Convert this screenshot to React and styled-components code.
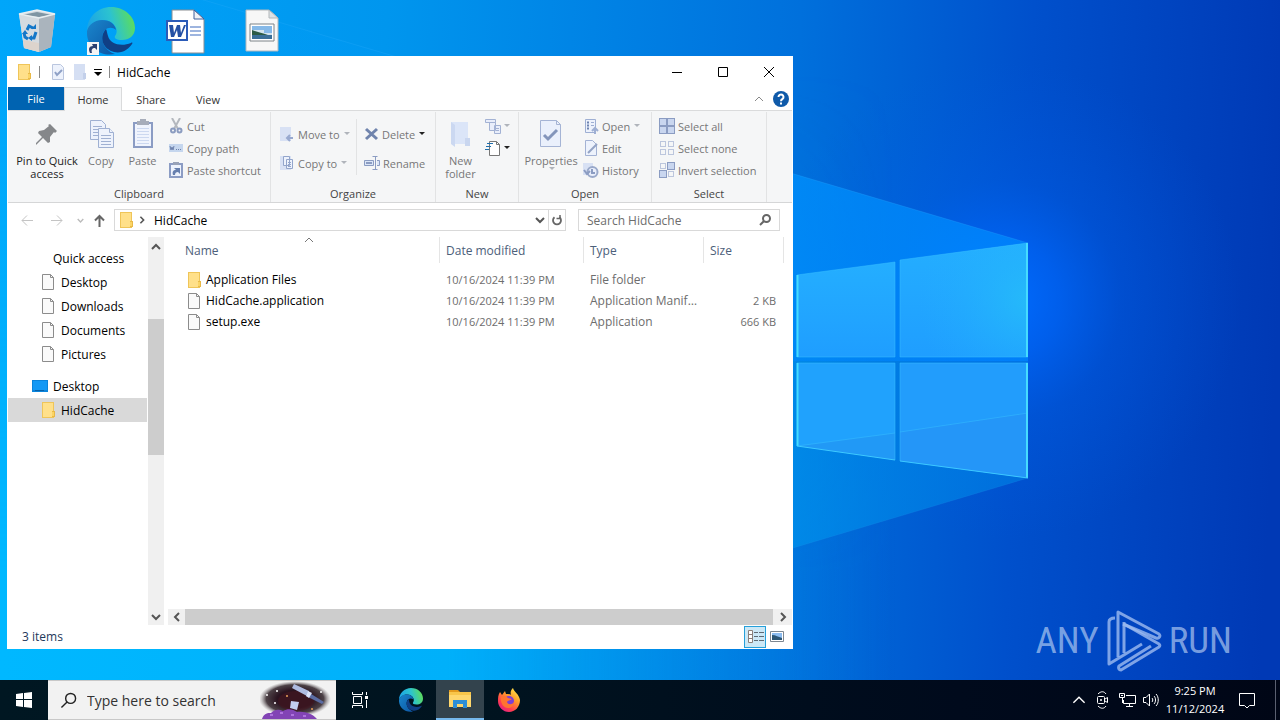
import React from 'react'
import styled, { createGlobalStyle, css } from 'styled-components'

const GlobalStyle = createGlobalStyle`
  * {
    box-sizing: border-box;
  }

  body {
    margin: 0;
    font-family: "Open Sans", "Noto Sans", sans-serif;
    font-size: 12px;
    color: #000;
  }

  button, input {
    font: inherit;
    color: inherit;
    border: 0;
    padding: 0;
    background: none;
    border-radius: 0;
  }

  svg {
    display: block;
    flex: none;
  }
`

/* ---------- desktop ---------- */

const Screen = styled.div`
  position: relative;
  min-height: 100vh;
  display: flex;
  flex-direction: column;
  overflow: hidden;
  background: #0078d7;
`

const WallpaperArt = styled.svg`
  position: absolute;
  inset: 0;
  width: 100%;
  height: 100%;
`

const Workspace = styled.main`
  position: relative;
  flex: 1;
`

const DesktopIcons = styled.div`
  display: flex;
  padding-top: 7px;
`

const DesktopIcon = styled.button`
  width: 74px;
  height: 48px;
  display: flex;
  justify-content: center;

  &:last-child {
    width: 80px;
  }
`

const Watermark = styled.div`
  position: absolute;
  right: 48px;
  bottom: 7px;
  display: flex;
  align-items: center;
  gap: 7px;
  color: rgba(190, 212, 245, 0.65);
  font-family: "Roboto Condensed", "Liberation Sans Narrow", "Liberation Sans", sans-serif;
  font-size: 37px;
  line-height: 64px;
`

/* ---------- explorer window ---------- */

const Window = styled.section`
  position: absolute;
  top: 56px;
  left: 7px;
  right: 487px;
  bottom: 31px;
  display: flex;
  flex-direction: column;
  background: #fff;
  border: 1px solid #fff;
  overflow: hidden;
`

const TitleBar = styled.header`
  display: flex;
  align-items: center;
  height: 30px;
  padding-left: 8px;

  > h1 {
    flex: 1;
    margin: 0;
    font-size: 12px;
    font-weight: 400;
  }
`

const QuickButton = styled.button`
  height: 22px;
  display: flex;
  align-items: center;
  justify-content: center;
  width: ${p => p.$width || 22}px;
`

const Rule = styled.span`
  width: 1px;
  height: 12px;
  margin: 0 ${p => p.$gap || 7}px;
  background: #8a8a8a;
`

const CaptionButton = styled.button`
  width: 46px;
  height: 30px;
  display: flex;
  align-items: center;
  justify-content: center;
`

const TabBar = styled.nav`
  display: flex;
  height: 24px;
  border-bottom: 1px solid #dadbdc;
`

const Tab = styled.button`
  width: ${p => p.$width || 56}px;
  height: 24px;
  font-size: 11px;
  color: #333;
  ${p => p.$file && css`
    height: 23px;
    color: #fff;
    background: #0063b1;
  `}
  ${p => p.$active && css`
    background: #f5f6f7;
    border: 1px solid #dadbdc;
    border-bottom: 0;
  `}
`

const TabTools = styled.div`
  margin-left: auto;
  display: flex;
  align-items: center;
  gap: 6px;
  padding-right: 3px;
`

const Ribbon = styled.div`
  display: flex;
  height: 92px;
  font-size: 11px;
  background: #f5f6f7;
  border-bottom: 1px solid #d5d6d7;
`

const Group = styled.section`
  width: ${p => p.$width}px;
  display: flex;
  flex-direction: column;
  border-right: 1px solid #e2e3e4;
  margin: 1px 0 0;

  > h2 {
    margin: 0;
    text-align: center;
    font-size: 11px;
    line-height: 17px;
    font-weight: 400;
    color: #444;
  }
`

const GroupBody = styled.div`
  flex: 1;
  display: flex;
  padding-top: 3px;
  padding-left: ${p => p.$inset || 4}px;
`

const BigButton = styled.button`
  width: ${p => p.$width}px;
  height: 66px;
  display: flex;
  flex-direction: column;
  align-items: center;
  padding-top: 3px;
  line-height: 13px;
  color: ${p => (p.$enabled ? '#222' : '#777')};

  > svg {
    margin-bottom: 4px;
  }
`

const Stack = styled.div`
  display: flex;
  flex-direction: column;
  width: ${p => p.$width || 'auto'};
  gap: ${p => p.$gap || 0}px;
  padding-top: ${p => p.$top || 0}px;
  padding-left: 4px;
`

const SmallButton = styled.button`
  height: 22px;
  display: flex;
  align-items: center;
  gap: ${p => p.$gap || 3}px;
  color: #777;
  white-space: nowrap;
`

const StackDivider = styled.span`
  width: 1px;
  height: 56px;
  margin: 4px 3px 0 8px;
  background: #e2e3e4;
`

const AddressRow = styled.div`
  display: flex;
  align-items: center;
  height: 34px;
  padding: 0 12px 0 9px;
`

const NavButton = styled.button`
  width: ${p => p.$width || 28}px;
  height: 22px;
  display: flex;
  align-items: center;
  justify-content: center;
`

const AddressBar = styled.div`
  flex: 1;
  display: flex;
  align-items: center;
  height: 22px;
  padding-left: 3px;
  margin-left: 1px;
  border: 1px solid #d9d9d9;

  > span {
    flex: 1;
    padding-left: 4px;
  }
`

const RefreshButton = styled(NavButton)`
  border-left: 1px solid #d9d9d9;
`

const SearchField = styled.label`
  width: 202px;
  height: 22px;
  margin-left: 12px;
  display: flex;
  align-items: center;
  padding: 0 8px;
  border: 1px solid #d9d9d9;

  > input {
    flex: 1;
    min-width: 0;
    outline: 0;
  }
  > input::placeholder {
    color: #6d6d6d;
    opacity: 1;
  }
`

const Body = styled.div`
  flex: 1;
  min-height: 0;
  display: flex;
`

const Tree = styled.nav`
  width: 139px;
  padding-top: 9px;
`

const TreeItem = styled.button`
  width: 100%;
  height: 24px;
  display: flex;
  align-items: center;
  gap: 5px;
  padding-left: ${p => p.$indent}px;
  margin-top: ${p => (p.$spaced ? 8 : 0)}px;
  background: ${p => (p.$selected ? '#d9d9d9' : 'transparent')};
`

const VScroll = styled.div`
  width: 16px;
  margin-left: 1px;
  display: flex;
  flex-direction: column;
  background: #f0f0f0;

  > i {
    flex: 0 0 35%;
    background: #cdcdcd;
  }
  > span {
    flex: 0 0 16%;
  }
  > button:last-child {
    margin-top: auto;
  }
`

const HScroll = styled.div`
  height: 16px;
  margin: auto 0 0 4px;
  display: flex;
  background: #f0f0f0;

  > i {
    flex: 1;
    background: #cdcdcd;
  }
`

const ScrollButton = styled.button`
  flex: none;
  width: ${p => p.$width || 16}px;
  height: ${p => p.$height || 16}px;
  display: flex;
  align-items: center;
  justify-content: center;
`

const FilePane = styled.div`
  flex: 1;
  min-width: 0;
  display: flex;
  flex-direction: column;
`

const FileTable = styled.table`
  width: calc(100% - 8px);
  table-layout: fixed;
  border-collapse: separate;
  border-spacing: 0;
  color: #6d6d6d;

  th {
    height: 26px;
    padding: 0 6px;
    border-right: 1px solid #e5e5e5;
    text-align: left;
    font-weight: 400;
    color: #4c607a;
  }
  th:first-child {
    padding-left: 21px;
  }
  td {
    height: 21px;
    padding: 0 3px 0 6px;
    white-space: nowrap;
    overflow: hidden;
    text-overflow: ellipsis;
  }
  td:first-child {
    padding-left: 22px;
    color: #000;
  }
  td:nth-child(2) {
    font-size: 11px;
  }
  td:last-child {
    padding-right: 8px;
    text-align: right;
    font-size: 11px;
  }
  tbody::before {
    content: "";
    display: block;
    height: 6px;
  }
`

const HeadCell = styled.div`
  position: relative;

  > svg {
    position: absolute;
    top: -7px;
    left: 119px;
  }
`

const FileName = styled.div`
  display: flex;
  align-items: center;
  gap: 4px;
`

const StatusBar = styled.footer`
  height: 23px;
  display: flex;
  align-items: center;
  padding: 0 4px 0 14px;
  color: #1e395b;

  > span {
    flex: 1;
  }
`

const ViewButton = styled.button`
  width: 22px;
  height: 22px;
  display: flex;
  align-items: center;
  justify-content: center;
  ${p => p.$active && css`
    background: #cce8f6;
    border: 1px solid #26a0da;
  `}
`

/* ---------- taskbar ---------- */

const Taskbar = styled.footer`
  position: relative;
  display: flex;
  height: 40px;
  color: #fff;
  background: linear-gradient(90deg, #001722 0%, #00131f 40%, #000a1c 75%, #000616 100%);
`

const TaskButton = styled.button`
  width: 48px;
  height: 40px;
  display: flex;
  align-items: center;
  justify-content: center;
  ${p => p.$active && css`
    background: #33434d;
    border-bottom: 2px solid #76b9ed;
  `}
`

const TaskSearch = styled.label`
  width: 288px;
  display: flex;
  align-items: center;
  padding-left: 12px;
  background: #f2f2f2;
  border: 1px solid #c8c8c8;
  border-width: 1px 0;
  color: #2b2b2b;

  > input {
    flex: 1;
    min-width: 0;
    margin-left: 10px;
    outline: 0;
    font-size: 14px;
  }
  > input::placeholder {
    color: #333;
    opacity: 1;
  }
`

const PinnedApps = styled.div`
  display: flex;
  gap: 1px;
  padding-left: 3px;
`

const Tray = styled.div`
  margin-left: auto;
  display: flex;
  align-items: center;
`

const TrayButton = styled.button`
  width: ${p => p.$width || 24}px;
  height: 40px;
  display: flex;
  align-items: center;
  justify-content: center;
`

const Clock = styled.button`
  width: 64px;
  height: 40px;
  font-size: 11px;
  line-height: 18px;
  white-space: nowrap;
  text-align: center;
`

const ShowDesktop = styled.button`
  width: 5px;
  height: 40px;
  margin-left: 8px;
  border-left: 1px solid #5a6070;
`

/* ---------- drawings ---------- */

const Wallpaper = () => (
  <WallpaperArt viewBox="0 0 1280 720" preserveAspectRatio="xMidYMid slice" aria-hidden="true">
    <defs>
      <linearGradient id="sky" gradientUnits="userSpaceOnUse" x1="0" x2="1290" y1="0" y2="60">
        <stop offset="0" stopColor="#00a6fa" />
        <stop offset="0.3" stopColor="#0096ee" />
        <stop offset="0.62" stopColor="#0070dc" />
        <stop offset="0.8" stopColor="#0050cc" />
        <stop offset="1" stopColor="#0039b5" />
      </linearGradient>
      <linearGradient id="floor" x1="0" x2="0.7" y1="0" y2="0">
        <stop offset="0" stopColor="#00b8ff" />
        <stop offset="0.5" stopColor="#00b0fa" />
        <stop offset="1" stopColor="#0088e4" stopOpacity="0" />
      </linearGradient>
      <linearGradient id="fade" x1="0" x2="0" y1="0" y2="1">
        <stop offset="0.1" stopColor="#fff" stopOpacity="0" />
        <stop offset="0.8" stopColor="#fff" />
      </linearGradient>
      <mask id="low">
        <rect width="1280" height="720" fill="url(#fade)" />
      </mask>
      <radialGradient id="glow" gradientUnits="userSpaceOnUse" cx="1000" cy="300" r="240">
        <stop offset="0" stopColor="#006cff" />
        <stop offset="0.25" stopColor="#0066fa" stopOpacity="0.7" />
        <stop offset="0.5" stopColor="#0060ee" stopOpacity="0.3" />
        <stop offset="1" stopColor="#005ae0" stopOpacity="0" />
      </radialGradient>
      <linearGradient id="beam" x1="0" x2="1" y1="0" y2="0">
        <stop offset="0" stopColor="#00a4ff" stopOpacity="0" />
        <stop offset="0.5" stopColor="#0098ff" stopOpacity="0.2" />
        <stop offset="0.77" stopColor="#0092ff" stopOpacity="0.7" />
        <stop offset="1" stopColor="#008cff" stopOpacity="0.7" />
      </linearGradient>
      <linearGradient id="beamLow" x1="0" x2="1" y1="0" y2="0">
        <stop offset="0.5" stopColor="#00a0f0" stopOpacity="0" />
        <stop offset="0.77" stopColor="#0096ee" stopOpacity="0.6" />
        <stop offset="1" stopColor="#007be2" stopOpacity="0.7" />
      </linearGradient>
      <linearGradient id="pane" x1="0" x2="0" y1="0" y2="1">
        <stop offset="0" stopColor="#24aeff" />
        <stop offset="1" stopColor="#1f9eff" />
      </linearGradient>
      <radialGradient id="shine" gradientUnits="userSpaceOnUse" cx="1028" cy="300" r="110">
        <stop offset="0" stopColor="#26c0f8" stopOpacity="0.75" />
        <stop offset="1" stopColor="#24aeff" stopOpacity="0" />
      </radialGradient>
    </defs>
    <rect width="1280" height="720" fill="url(#sky)" />
    <rect width="1280" height="720" fill="url(#floor)" mask="url(#low)" />
    <rect width="1280" height="720" fill="url(#glow)" />
    <path d="M0-60 1028 243V361H0z" fill="url(#beam)" />
    <path d="M0 361H1028V478L0 784z" fill="url(#beamLow)" />
    <path d="M0-60 1028 243" stroke="#3cb4ff" strokeOpacity="0.2" />
    <path d="M1028 478 793 548" stroke="#2aa4f4" strokeOpacity="0.15" />
    <path d="M797 275 895 262V357H797z" fill="url(#pane)" />
    <path d="M900 260 1028 243V357H900z" fill="url(#pane)" />
    <path d="M900 260 1028 243V357H900z" fill="url(#shine)" />
    <path d="M797 363H895V460L797 446z" fill="#20a2fd" />
    <path d="M900 363H1028V478L900 461z" fill="#229dfc" />
    <path d="M797 446 895 433V460z" fill="#2199f6" />
    <path d="M900 432 1028 413V478L900 461z" fill="#2496f8" />
    <g fill="none" stroke="#38c0ff" strokeWidth="1">
      <path d="M797 357V275L895 262V357H797M900 357V260L1028 243M900 357H1028M797 363H895V460M1028 363H900V461M797 446 895 433M900 432 1028 413" strokeOpacity="0.5" />
    </g>
    <path d="M1027 243V357M1027 363V478M797.500 275V357M797.500 363V446" fill="none" stroke="#46dcff" strokeWidth="2" />
    <path d="M1028 478 900 461M895 460 797 446" fill="none" stroke="#3cc8ff" />
  </WallpaperArt>
)

const BinIcon = () => (
  <svg width="48" height="48" viewBox="0 0 48 48">
    <path d="M6 7 24 3 42 7 38 40 26 45 11 41z" fill="#d2dae0" />
    <path d="M6 7 26 11 26 45 11 41z" fill="#d5dbe0" />
    <path d="M10 33 26 36 26 45 11 41z" fill="#dcd3cc" />
    <path d="M26 11 42 7 38 40 26 45z" fill="#aab4bd" />
    <path d="M9 8 24 5 39 8 26 10z" fill="#7f95a3" />
    <path d="M6 7 24 3 42 7 26 11z" fill="none" stroke="#e8eef1" strokeWidth="1.500" />
    <g fill="none" stroke="#1477c8" strokeWidth="3">
      <path d="M14 23 16 19 20 21" />
      <path d="M23 25 21 31 17 31" />
      <path d="M11 26 12 30 15 32" />
    </g>
    <path d="M18 22h5v-5zM19 28v6l-4-3zM9 27l3-4 3 4z" fill="#1477c8" />
  </svg>
)

const EdgeIcon = ({ size, id }) => (
  <svg width={size} height={size} viewBox="0 0 48 48">
    <defs>
      <linearGradient id={`${id}a`} x1="0" x2="1" y1="0.4" y2="0.2">
        <stop offset="0" stopColor="#1ba4e6" />
        <stop offset="0.5" stopColor="#2cc3cf" />
        <stop offset="1" stopColor="#63e04c" />
      </linearGradient>
      <linearGradient id={`${id}b`} x1="0" x2="1" y1="0" y2="1">
        <stop offset="0" stopColor="#1a86cc" />
        <stop offset="1" stopColor="#0c55a4" />
      </linearGradient>
    </defs>
    <path d="M0 24C0 10 11 0 24 0c14 0 24 10 24 21 0 8-6 12-13 12-6 0-8-2-7-4 2-3 2-5 1-8-2-5-7-8-13-8C8 13 2 18 0 24z" fill={`url(#${id}a)`} />
    <path d="M0 24c2-7 8-11 15-11 8 0 13 4 14 10-3-3-8-3-11 0-5 5-4 19 10 24C12 50-1 39 0 24z" fill={`url(#${id}b)`} />
    <path d="M19 22c-7 7-4 20 8 23 8 2 15-3 18-8 1-1 0-2-1-1-10 4-21 1-23-7-1-3-1-5-2-7z" fill="#103f85" />
  </svg>
)

const EdgeShortcutIcon = () => (
  <svg width="48" height="48" viewBox="0 0 48 48">
    <EdgeIcon size={48} id="deskEdge" />
    <path d="M0 35h12v13H0z" fill="#f4f4f4" />
    <path d="M3 46c-2-4-1-7 3-7l-1-2h5v6l-2-2c-3 0-4 2-3 5z" fill="#2b4070" />
  </svg>
)

const WordIcon = () => (
  <svg width="42" height="48" viewBox="0 0 42 48">
    <path d="M8 3h22l10 9v34H8z" fill="#fff" stroke="#8a8d92" />
    <path d="M30 3v9h10z" fill="#eef1f5" stroke="#3f5f9c" />
    <path d="M2 13h22v21H2z" fill="#2b5bb8" />
    <path d="M4 15h18v17H4z" fill="#fff" />
    <path d="M5 18h4l1 8 3-8h3l1 8 3-8h2l-5 12h-3l-1-7-3 7H7z" fill="#2450a4" />
    <path d="M26 20h11M26 24h11M26 28h11" stroke="#3c6bbf" />
  </svg>
)

const PictureFileIcon = () => (
  <svg width="34" height="48" viewBox="0 0 34 48">
    <path d="M1 3h23l9 8v33H1z" fill="#f7f7f7" stroke="#b3b7ba" />
    <path d="M24 3v8h9z" fill="#dde2e6" stroke="#b3b7ba" />
    <path d="M5 17h24v17H5z" fill="#fff" stroke="#7c8388" />
    <path d="M7 19h20v13H7z" fill="#86b9e8" />
    <path d="M7 23h12v3h8v2H7z" fill="#d2e4ef" />
    <path d="M7 23c5 2 10 3 16 5H7z" fill="#2c5b45" />
    <path d="M7 28h20v4H7z" fill="#3a6f98" />
  </svg>
)

const FolderIcon = () => (
  <svg width="16" height="16" viewBox="0 0 16 16">
    <path d="M2 0h12v16H2z" fill="#efc559" />
    <path d="M3 1h10v14H3z" fill="#ffe08a" />
    <path d="M12 9h3v6h-3z" fill="#e9b947" />
    <path d="M12 10h2v4h-2z" fill="#fbd566" />
  </svg>
)

const FileIcon = () => (
  <svg width="16" height="16" viewBox="0 0 16 16">
    <path d="M2.500.5h8l3 3v12h-11z" fill="#fafafa" stroke="#8c8c8c" />
    <path d="M10.500.5v3h3" fill="none" stroke="#8c8c8c" />
  </svg>
)

const MonitorIcon = () => (
  <svg width="16" height="16" viewBox="0 0 16 16">
    <path d="M0 2h16v12H0z" fill="#0a84dc" />
    <path d="M1 3h14v9H1z" fill="#1499f5" />
    <path d="M3 12h9v1H3z" fill="#075fa6" />
  </svg>
)

const Caret = ({ color = '#b0b4bb' }) => (
  <svg width="7" height="4" viewBox="0 0 7 4">
    <path d="M1 0h6L4 3z" fill={color} />
  </svg>
)

const Chevron = ({ dir = 'down', color = '#555', size = 10, weight = 2 }) => {
  const paths = {
    down: 'M1 3l4 4 4-4',
    up: 'M1 7l4-4 4 4',
    left: 'M7 1L3 5l4 4',
    right: 'M3 1l4 4-4 4'
  }
  return (
    <svg width={size} height={size} viewBox="0 0 10 10">
      <path d={paths[dir]} fill="none" stroke={color} strokeWidth={weight} />
    </svg>
  )
}

const Arrow = ({ dir, color }) => {
  const paths = {
    left: 'M12 6.500H1M6 1.500l-5 5 5 5',
    right: 'M1 6.500h11M7 1.500l5 5-5 5',
    up: 'M6.500 13V2M2 6.500L6.500 2 11 6.500'
  }
  return (
    <svg width="13" height="13" viewBox="0 0 13 13">
      <path d={paths[dir]} fill="none" stroke={color} strokeWidth={dir === 'up' ? 2 : 1} />
    </svg>
  )
}

const PinIcon = () => (
  <svg width="32" height="32" viewBox="0 0 32 32">
    <path d="M19 6l7 7-2 2-1-1-4 5v5l-2 1-5-5-6 6-1 1 0-2 6-6-4-4 1-2 5-1 5-4-1-1z" fill="#85878a" />
  </svg>
)

const CopyIcon = () => (
  <svg width="32" height="32" viewBox="0 0 32 32" fill="#edf2fc" stroke="#9fb0d2">
    <path d="M5.500 2.500h11l4 4v15h-15z" />
    <path d="M8 8.500h9M8 11.500h6M8 14.500h5M8 17.500h5" />
    <path d="M13.500 10.500h11l4 4v15h-15z" />
    <path d="M24.500 10.500v4h4M16 17.500h10M16 20.500h10M16 23.500h10M16 26.500h10" />
  </svg>
)

const PasteIcon = () => (
  <svg width="32" height="32" viewBox="0 0 32 32">
    <path d="M6 4h20v26H6z" fill="#8b9cc4" />
    <path d="M8 6h16v22H8z" fill="#f0f4fd" />
    <path d="M13 1h6v2h3v4H10V3h3z" fill="#a7adba" />
    <path d="M10 10.500h12M10 13.500h12M10 16.500h12M10 19.500h12M10 22.500h12M10 25.500h12" stroke="#ccd8f0" />
  </svg>
)

const CutIcon = () => (
  <svg width="16" height="16" viewBox="0 0 16 16" fill="none">
    <path d="M4 0l6 11M12 0L6 11" stroke="#b4b8be" strokeWidth="2" />
    <circle cx="5" cy="12.500" r="2" stroke="#8b9cc0" strokeWidth="2" />
    <circle cx="11.500" cy="12.500" r="2" stroke="#8b9cc0" strokeWidth="2" />
  </svg>
)

const CopyPathIcon = () => (
  <svg width="16" height="16" viewBox="0 0 16 16">
    <path d="M1 4h14v8H1z" fill="#c5d6ee" />
    <path d="M2 6l1 4 1-3 1 3 1-4M8 9.500h1M10 9.500h1M12 9.500h1" fill="none" stroke="#6e82ad" />
  </svg>
)

const PasteShortcutIcon = () => (
  <svg width="16" height="16" viewBox="0 0 16 16">
    <path d="M2 2h12v13H2z" fill="#edf2fc" stroke="#8b9cc4" strokeWidth="2" />
    <path d="M5 0h6v3H5z" fill="#98a2b7" />
    <path d="M5 13c-1-3 0-5 3-5L6 6h6v6l-2-2c-2 0-3 1-3 3z" fill="#667fae" />
  </svg>
)

const MoveIcon = () => (
  <svg width="16" height="16" viewBox="0 0 16 16">
    <path d="M1 1h11v14H1z" fill="#d8e1f4" />
    <path d="M14 12H8m3-3l-3 3 3 3" fill="none" stroke="#98a9cf" strokeWidth="2" />
  </svg>
)

const CopyToIcon = () => (
  <svg width="16" height="16" viewBox="0 0 16 16">
    <path d="M1 1h11v14H1z" fill="#d8e1f4" />
    <path d="M4.500 1.500h6v9h-6zM7.500 4.500h6v9h-6z" fill="#edf2fc" stroke="#93a5cb" />
    <path d="M9 7.500h3M9 9.500h3M9 11.500h3" stroke="#93a5cb" />
  </svg>
)

const DeleteIcon = () => (
  <svg width="15" height="16" viewBox="0 0 15 16">
    <path d="M2 3l11 10M13 3L2 13" stroke="#7084ad" strokeWidth="3" />
  </svg>
)

const RenameIcon = () => (
  <svg width="16" height="16" viewBox="0 0 16 16" fill="none" stroke="#8b9cc2">
    <path d="M.5 5.500h9v5h-9zM13 5.500h2.500v5H13" fill="#dbe6f8" />
    <path d="M2 8h6" strokeWidth="2" />
    <path d="M8.500 1.500h5M8.500 14.500h5M11.500 2v12" strokeWidth="1" />
  </svg>
)

const NewFolderIcon = () => (
  <svg width="32" height="32" viewBox="0 0 32 32">
    <path d="M6 4h17v22H6z" fill="#dbe5f8" />
    <path d="M6 4l4 3v22l-4-3z" fill="#cbd8f1" />
    <path d="M20 20h5v8h-5z" fill="#c9d6ef" />
  </svg>
)

const NewItemIcon = () => (
  <svg width="17" height="16" viewBox="0 0 17 16" fill="#e9eefb" stroke="#a3b2d4">
    <path d="M.5 1.500h10v3H.5zM4.500 4.500h6v8h-6zM9.500 7.500h6v8h-6z" />
    <path d="M11 10.500h3M11 12.500h3" />
  </svg>
)

const EasyAccessIcon = () => (
  <svg width="17" height="16" viewBox="0 0 17 16" fill="none">
    <path d="M4.500 1.500h7l3 3v11h-10z" fill="#fff" stroke="#777" />
    <path d="M11.500 1.500v3h3" stroke="#777" />
    <path d="M2 3.500h6M1 6.500h5M0 9.500h4" stroke="#1f6fae" />
  </svg>
)

const PropertiesIcon = () => (
  <svg width="32" height="32" viewBox="0 0 32 32" fill="none">
    <path d="M5.500 2.500h16l4 4v22h-20z" fill="#eaf0fc" stroke="#a5b4d5" />
    <path d="M21.500 2.500v4h4" stroke="#a5b4d5" />
    <path d="M9 17l4 4 9-9" stroke="#8395bb" strokeWidth="3" />
  </svg>
)

const OpenIcon = () => (
  <svg width="16" height="16" viewBox="0 0 16 16" fill="none" stroke="#9eafd3">
    <path d="M2.500 1.500h10v13h-10z" fill="#edf2fc" />
    <path d="M4 4.500h2M4 7.500h2M4 10.500h2" stroke="#6f84b1" strokeWidth="2" />
    <path d="M8 4.500h3M8 7.500h3" />
    <path d="M12 16v-6m-3 3l3-3 3 3" strokeWidth="2" />
  </svg>
)

const EditIcon = () => (
  <svg width="16" height="16" viewBox="0 0 16 16" fill="none" stroke="#a3b2d4">
    <path d="M2.500.5h7l4 4v11h-11z" fill="#edf2fc" />
    <path d="M5 13L14 4" stroke="#93a3c5" strokeWidth="2" />
  </svg>
)

const HistoryIcon = () => (
  <svg width="16" height="16" viewBox="0 0 16 16" fill="none">
    <path d="M0 1h10v12H0z" fill="#d8e1f4" />
    <circle cx="9.500" cy="10" r="5" fill="#e9eefb" stroke="#9aa9ca" strokeWidth="2" />
    <path d="M9 7v4h3M1 8l3 4 3-3" stroke="#8b9cc2" strokeWidth="2" />
  </svg>
)

const SelectIcon = ({ filled }) => (
  <svg width="16" height="16" viewBox="0 0 16 16">
    {[[0, 0], [8, 0], [0, 8], [8, 8]].map(([x, y], i) => (
      <rect
        key={i}
        x={x + (filled[i] ? 0.5 : 1.5)}
        y={y + (filled[i] ? 0.5 : 1.5)}
        width={filled[i] ? 7 : 5}
        height={filled[i] ? 7 : 5}
        fill={filled[i] ? '#c9d6ef' : '#f5f6f7'}
        stroke={filled[i] ? '#8b9cc2' : '#bcc6dd'}
      />
    ))}
  </svg>
)

const QuickCheckIcon = () => (
  <svg width="14" height="16" viewBox="0 0 14 16" fill="none">
    <path d="M1.500.5h8l3 3v12h-11z" fill="#edf2fc" stroke="#bac6df" />
    <path d="M4 8l2 3 5-5" stroke="#8fa1c6" strokeWidth="2" />
  </svg>
)

const QuickFolderIcon = () => (
  <svg width="14" height="16" viewBox="0 0 14 16">
    <path d="M1 0h11v16H1z" fill="#d5dff3" />
    <path d="M10 9h3v6h-3z" fill="#c3d0ea" />
  </svg>
)

const MagnifierIcon = ({ size = 12, color = '#666', weight = 2 }) => (
  <svg width={size} height={size} viewBox="0 0 12 12">
    <circle cx="7.500" cy="4.500" r="3.500" fill="none" stroke={color} strokeWidth={weight} />
    <path d="M5 7L1 11" stroke={color} strokeWidth={weight} />
  </svg>
)

const RefreshIcon = () => (
  <svg width="12" height="12" viewBox="0 0 12 12" fill="none" stroke="#666">
    <path d="M8.500 3.200A4 4 0 1 1 3.500 3.200" strokeWidth="1.800" />
    <path d="M5.500 4.500H9V1" strokeWidth="1.500" />
  </svg>
)

const HelpIcon = () => (
  <svg width="16" height="16" viewBox="0 0 16 16">
    <circle cx="8" cy="8" r="8" fill="#0f5aa9" />
    <path d="M5.500 6a2.500 2.500 0 1 1 4 2C8.500 8.500 8 9 8 10.200M8 11.500v2" fill="none" stroke="#fff" strokeWidth="2" />
  </svg>
)

const DetailsIcon = () => (
  <svg width="17" height="14" viewBox="0 0 17 14">
    <path d="M1.500.5h4v12h-4zM1.500 4.500h4M1.500 8.500h4" fill="#fff" stroke="#8a7f7a" />
    <path d="M7 2.500h4M12 2.500h5M7 6.500h4M12 6.500h5M7 10.500h4M12 10.500h5" stroke="#5f6a74" />
  </svg>
)

const ThumbsIcon = () => (
  <svg width="14" height="11" viewBox="0 0 14 11">
    <path d="M.5.5h13v10H.5z" fill="#fff" stroke="#7d8791" />
    <path d="M2 2h10v7H2z" fill="#8cbcf0" />
    <path d="M2 4c4 0 6 2 10 3v2H2z" fill="#2c5573" />
  </svg>
)

const WindowsIcon = () => (
  <svg width="16" height="16" viewBox="0 0 16 16" fill="#fff">
    <path d="M0 2l7-1v6H0zM8 1l8-1v7H8zM0 8h7v7l-7-1zM8 8h8v8l-8-1z" />
  </svg>
)

const TelescopeArt = () => (
  <svg width="76" height="38" viewBox="0 0 76 38">
    <defs>
      <radialGradient id="night">
        <stop offset="0.5" stopColor="#2a1420" />
        <stop offset="0.8" stopColor="#2f2228" stopOpacity="0.85" />
        <stop offset="1" stopColor="#8a8486" stopOpacity="0" />
      </radialGradient>
    </defs>
    <ellipse cx="35" cy="18" rx="36" ry="18" fill="url(#night)" />
    <ellipse cx="36" cy="20" rx="18" ry="10" fill="#4a1520" opacity="0.5" />
    <path d="M34 3l15 7-2 5-15-8z" fill="#aebbe0" />
    <path d="M48 11l16 10-2 2-16-8z" fill="#5b6ca3" />
    <path d="M31 20l8 1-2 8-7-2z" fill="#c3cdf0" />
    <path d="M48 10l4 2-3 5-3-2z" fill="#dbe3fa" />
    <path d="M2 38c2-6 6-6 9-6 4-4 8-4 12-2 5-3 10-2 14 1 8-1 16 2 20 7z" fill="#8244b5" />
    <path d="M10 34h3M20 32h3M31 34h3M43 35h3" stroke="#ad72dc" strokeWidth="2" />
    <g fill="#fff">
      <circle cx="7" cy="14" r="1" />
      <circle cx="17" cy="10" r="1" />
      <circle cx="15" cy="22" r="1" />
      <circle cx="61" cy="11" r="1" />
    </g>
    <circle cx="27" cy="15" r="1" fill="#e8a05a" />
    <circle cx="52" cy="28" r="1" fill="#e8a05a" />
  </svg>
)

const TaskViewIcon = () => (
  <svg width="17" height="16" viewBox="0 0 17 16" fill="none" stroke="#fff">
    <path d="M.5 0v2.500h10V0M.5 16v-2.500h10V16M1.500 4.500h8v7h-8zM14.500 0v3M14.500 8v8" />
    <path d="M13 4h3v3h-3z" fill="#fff" stroke="none" />
  </svg>
)

const ExplorerIcon = () => (
  <svg width="22" height="20" viewBox="0 0 22 20">
    <path d="M0 1h9l2 2H0z" fill="#e49b1d" />
    <path d="M0 3h22v15H0z" fill="#ffd76d" />
    <path d="M0 3h22v3H0z" fill="#f9c64a" />
    <path d="M4 11h14v8h-4v-4H8v4H4z" fill="#2e8fd6" />
  </svg>
)

const FirefoxIcon = () => (
  <svg width="24" height="24" viewBox="0 0 24 24">
    <defs>
      <linearGradient id="fox" x1="0.9" x2="0.2" y1="0" y2="1">
        <stop offset="0" stopColor="#fff44f" />
        <stop offset="0.4" stopColor="#ff9a2a" />
        <stop offset="0.75" stopColor="#ff3b50" />
        <stop offset="1" stopColor="#e0208a" />
      </linearGradient>
    </defs>
    <path d="M3 4l2 3 3-4 1 3c2 0 4 0 5 1-1-3 0-5 2-7 1 4 6 6 7 12 0 7-5 12-11 12S1 19 1 13c0-3 0-6 2-9z" fill="url(#fox)" />
    <circle cx="12" cy="13" r="5" fill="#7b3fd6" />
    <path d="M4 9c3-2 5-1 7 1l4 1c-2 2-4 1-5 3 1 3 5 3 7 0 0 4-3 6-6 6-5 0-8-6-7-11z" fill="#ff7430" />
  </svg>
)

const CameraIcon = () => (
  <svg width="14" height="18" viewBox="0 0 14 18" fill="none" stroke="#fff">
    <path d="M2 3c3-3 6-3 8 0M2 15c3 3 6 3 8 0" />
    <rect x="1.500" y="5.500" width="7" height="7" rx="1" />
    <path d="M9 8l2.500-1.500v5L9 10" />
    <circle cx="5" cy="9" r="1" fill="#fff" stroke="none" />
  </svg>
)

const NetworkIcon = () => (
  <svg width="17" height="16" viewBox="0 0 17 16" fill="none" stroke="#fff">
    <path d="M7 3.500h9.500v8h-12V8M7 14.500h7M10.500 12v2M.5 1.500h5v4h-5zM3.500 6v5M2 3.500h2" />
  </svg>
)

const SpeakerIcon = () => (
  <svg width="18" height="16" viewBox="0 0 18 16" fill="none" stroke="#fff">
    <path d="M1.500 5.500H4l3.500-3.500v12L4 10.500H1.500zM10 6c1 1 1 3 0 4M12 4c2 2 2 6 0 8M14 2c3 3 3 9 0 12" />
  </svg>
)

const ActionCenterIcon = () => (
  <svg width="18" height="17" viewBox="0 0 18 17" fill="none" stroke="#fff">
    <path d="M1.500 1.500h15v12h-5l-2.500 2.500-2.500-2.500h-5z" />
  </svg>
)

const LogoMark = () => (
  <svg width="56" height="62" viewBox="0 0 56 62" fill="none" stroke="#9dbcf0" strokeOpacity="0.8" strokeWidth="3" strokeLinejoin="round">
    <path d="M9 8C5 8 3 9 3 12v42l33-20" />
    <path d="M12 47V2l41 22c2 2 0 5-3 4L17 14" />
    <path d="M18 43V12M18 14l35 20c1 1 1 2 0 3L15 60c-2 0-3-2-2-4l32-20" />
  </svg>
)

/* ---------- data ---------- */

const places = [
  { label: 'Quick access', indent: 45 },
  { label: 'Desktop', indent: 32, icon: <FileIcon /> },
  { label: 'Downloads', indent: 32, icon: <FileIcon /> },
  { label: 'Documents', indent: 32, icon: <FileIcon /> },
  { label: 'Pictures', indent: 32, icon: <FileIcon /> },
  { label: 'Desktop', indent: 24, icon: <MonitorIcon />, spaced: true },
  { label: 'HidCache', indent: 32, icon: <FolderIcon />, selected: true }
]

const files = [
  { name: 'Application Files', date: '10/16/2024 11:39 PM', type: 'File folder', size: '', folder: true },
  { name: 'HidCache.application', date: '10/16/2024 11:39 PM', type: 'Application Manifest', size: '2 KB' },
  { name: 'setup.exe', date: '10/16/2024 11:39 PM', type: 'Application', size: '666 KB' }
]

/* ---------- window parts ---------- */

const RibbonBar = () => (
  <Ribbon>
    <Group $width={263}>
      <GroupBody $inset={5}>
        <BigButton $width={68} $enabled><PinIcon />Pin to Quick<br />access</BigButton>
        <BigButton $width={40}><CopyIcon />Copy</BigButton>
        <BigButton $width={43}><PasteIcon />Paste</BigButton>
        <Stack>
          <SmallButton><CutIcon />Cut</SmallButton>
          <SmallButton><CopyPathIcon />Copy path</SmallButton>
          <SmallButton><PasteShortcutIcon />Paste shortcut</SmallButton>
        </Stack>
      </GroupBody>
      <h2>Clipboard</h2>
    </Group>
    <Group $width={165}>
      <GroupBody>
        <Stack $width="73px" $gap={7} $top={8}>
          <SmallButton><MoveIcon />Move to <Caret /></SmallButton>
          <SmallButton><CopyToIcon />Copy to <Caret /></SmallButton>
        </Stack>
        <StackDivider />
        <Stack $gap={7} $top={8}>
          <SmallButton><DeleteIcon />Delete <Caret color="#222" /></SmallButton>
          <SmallButton><RenameIcon />Rename</SmallButton>
        </Stack>
      </GroupBody>
      <h2>Organize</h2>
    </Group>
    <Group $width={83}>
      <GroupBody>
        <BigButton $width={41}><NewFolderIcon />New<br />folder</BigButton>
        <Stack>
          <SmallButton aria-label="New item" $gap={1}><NewItemIcon /><Caret /></SmallButton>
          <SmallButton aria-label="Easy access" $gap={1}><EasyAccessIcon /><Caret color="#222" /></SmallButton>
        </Stack>
      </GroupBody>
      <h2>New</h2>
    </Group>
    <Group $width={133}>
      <GroupBody>
        <BigButton $width={56}><PropertiesIcon />Properties<Caret /></BigButton>
        <Stack>
          <SmallButton><OpenIcon />Open <Caret /></SmallButton>
          <SmallButton><EditIcon />Edit</SmallButton>
          <SmallButton><HistoryIcon />History</SmallButton>
        </Stack>
      </GroupBody>
      <h2>Open</h2>
    </Group>
    <Group $width={115}>
      <GroupBody $inset={3}>
        <Stack>
          <SmallButton><SelectIcon filled={[1, 1, 1, 1]} />Select all</SmallButton>
          <SmallButton><SelectIcon filled={[0, 0, 0, 0]} />Select none</SmallButton>
          <SmallButton><SelectIcon filled={[0, 1, 1, 0]} />Invert selection</SmallButton>
        </Stack>
      </GroupBody>
      <h2>Select</h2>
    </Group>
  </Ribbon>
)

const ExplorerWindow = () => (
  <Window>
    <TitleBar>
      <FolderIcon />
      <Rule />
      <QuickButton aria-label="Properties"><QuickCheckIcon /></QuickButton>
      <QuickButton aria-label="New folder"><QuickFolderIcon /></QuickButton>
      <QuickButton $width={14} aria-label="Customize">
        <svg width="8" height="7" viewBox="0 0 8 7"><path d="M0 0h8v1H0zM0 3h8L4 7z" /></svg>
      </QuickButton>
      <Rule $gap={4} />
      <h1>&nbsp;HidCache</h1>
      <CaptionButton aria-label="Minimize">
        <svg width="10" height="10"><path d="M0 5.500h10" stroke="#000" /></svg>
      </CaptionButton>
      <CaptionButton aria-label="Maximize">
        <svg width="10" height="10"><path d="M.5.5h9v9h-9z" fill="none" stroke="#000" /></svg>
      </CaptionButton>
      <CaptionButton aria-label="Close">
        <svg width="10" height="10"><path d="M0 0l10 10M10 0L0 10" stroke="#000" /></svg>
      </CaptionButton>
    </TitleBar>
    <TabBar>
      <Tab $file>File</Tab>
      <Tab $active $width={58}>Home</Tab>
      <Tab $width={58}>Share</Tab>
      <Tab>View</Tab>
      <TabTools>
        <QuickButton $width={16} aria-label="Collapse ribbon"><Chevron dir="up" color="#888" weight={1} /></QuickButton>
        <QuickButton $width={16} aria-label="Help"><HelpIcon /></QuickButton>
      </TabTools>
    </TabBar>
    <RibbonBar />
    <AddressRow>
      <NavButton aria-label="Back" $width={20}><Arrow dir="left" color="#c4c4c4" /></NavButton>
      <NavButton aria-label="Forward" $width={38}><Arrow dir="right" color="#c4c4c4" /></NavButton>
      <NavButton aria-label="Recent" $width={10}><Chevron size={7} color="#bbb" /></NavButton>
      <NavButton aria-label="Up"><Arrow dir="up" color="#666" /></NavButton>
      <AddressBar>
        <FolderIcon />
        <NavButton $width={16} aria-label="Open path"><Chevron dir="right" size={8} /></NavButton>
        <span>HidCache</span>
        <NavButton $width={16} aria-label="Previous locations"><Chevron /></NavButton>
        <RefreshButton $width={17} aria-label="Refresh"><RefreshIcon /></RefreshButton>
      </AddressBar>
      <SearchField>
        <input type="text" placeholder="Search HidCache" aria-label="Search HidCache" />
        <MagnifierIcon />
      </SearchField>
    </AddressRow>
    <Body>
      <Tree>
        {places.map((p, i) => (
          <TreeItem key={i} $indent={p.indent} $spaced={p.spaced} $selected={p.selected}>
            {p.icon}
            {p.label}
          </TreeItem>
        ))}
      </Tree>
      <VScroll>
        <ScrollButton $height={20} aria-label="Scroll up"><Chevron dir="up" /></ScrollButton>
        <span />
        <i />
        <ScrollButton aria-label="Scroll down"><Chevron /></ScrollButton>
      </VScroll>
      <FilePane>
        <FileTable>
          <colgroup>
            <col />
            <col width="144" />
            <col width="120" />
            <col width="80" />
          </colgroup>
          <thead>
            <tr>
              <th><HeadCell>Name<Chevron dir="up" color="#777" weight={1} /></HeadCell></th>
              <th>Date modified</th>
              <th>Type</th>
              <th>Size</th>
            </tr>
          </thead>
          <tbody>
            {files.map(f => (
              <tr key={f.name}>
                <td><FileName>{f.folder ? <FolderIcon /> : <FileIcon />}{f.name}</FileName></td>
                <td>{f.date}</td>
                <td>{f.type}</td>
                <td>{f.size}</td>
              </tr>
            ))}
          </tbody>
        </FileTable>
        <HScroll>
          <ScrollButton $width={17} aria-label="Scroll left"><Chevron dir="left" /></ScrollButton>
          <i />
          <ScrollButton $width={19} aria-label="Scroll right"><Chevron dir="right" /></ScrollButton>
        </HScroll>
      </FilePane>
    </Body>
    <StatusBar>
      <span>3 items</span>
      <ViewButton $active aria-label="Details view"><DetailsIcon /></ViewButton>
      <ViewButton aria-label="Thumbnail view"><ThumbsIcon /></ViewButton>
    </StatusBar>
  </Window>
)

export default function App () {
  return (
    <Screen>
      <GlobalStyle />
      <Wallpaper />
      <Workspace>
        <DesktopIcons>
          <DesktopIcon aria-label="Recycle Bin"><BinIcon /></DesktopIcon>
          <DesktopIcon aria-label="Microsoft Edge"><EdgeShortcutIcon /></DesktopIcon>
          <DesktopIcon aria-label="Word document"><WordIcon /></DesktopIcon>
          <DesktopIcon aria-label="Picture"><PictureFileIcon /></DesktopIcon>
        </DesktopIcons>
        <ExplorerWindow />
        <Watermark>ANY<LogoMark />RUN</Watermark>
      </Workspace>
      <Taskbar>
        <TaskButton aria-label="Start"><WindowsIcon /></TaskButton>
        <TaskSearch>
          <MagnifierIcon size={17} color="#222" weight={1} />
          <input type="text" placeholder="Type here to search" aria-label="Type here to search" />
          <TelescopeArt />
        </TaskSearch>
        <TaskButton aria-label="Task view"><TaskViewIcon /></TaskButton>
        <PinnedApps>
          <TaskButton aria-label="Microsoft Edge"><EdgeIcon size={24} id="taskEdge" /></TaskButton>
          <TaskButton $active aria-label="File Explorer"><ExplorerIcon /></TaskButton>
          <TaskButton aria-label="Firefox"><FirefoxIcon /></TaskButton>
        </PinnedApps>
        <Tray>
          <TrayButton aria-label="Show hidden icons"><Chevron dir="up" color="#fff" size={14} weight={1} /></TrayButton>
          <TrayButton aria-label="Meet now"><CameraIcon /></TrayButton>
          <TrayButton aria-label="Network"><NetworkIcon /></TrayButton>
          <TrayButton aria-label="Volume"><SpeakerIcon /></TrayButton>
          <Clock>9:25 PM<br />11/12/2024</Clock>
          <TrayButton $width={40} aria-label="Notifications"><ActionCenterIcon /></TrayButton>
          <ShowDesktop aria-label="Show desktop" />
        </Tray>
      </Taskbar>
    </Screen>
  )
}
